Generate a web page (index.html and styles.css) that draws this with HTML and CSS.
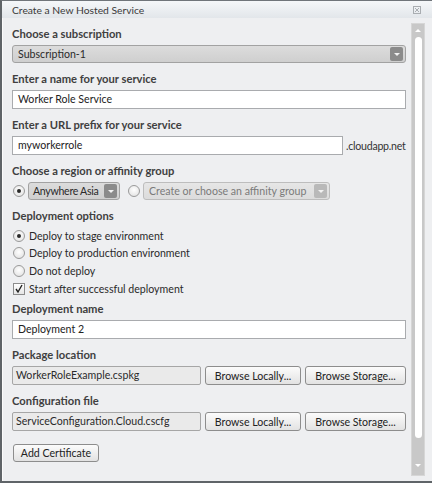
FILE: index.html
```html
<!DOCTYPE html>
<html lang="en">

<head>
    <meta charset="UTF-8">
    <meta name="viewport" content="width=device-width, initial-scale=1.0">
    <title>Create a New Hosted Service</title>
    <link rel="stylesheet" href="styles.css">
</head>

<body>
    <div class="dialog">
        <div class="titlebar">
            <span class="title">Create a New Hosted Service</span>
            <svg class="close" width="8" height="8" viewBox="0 0 8 8">
                <rect x="0.5" y="0.5" width="7" height="7" fill="none" stroke="#a9adb1" />
                <path d="M2 2 L6 6 M6 2 L2 6" stroke="#a9adb1" stroke-width="1" />
            </svg>
        </div>

        <div class="body">
            <div class="content">
                <div class="field">
                    <div class="label">Choose a subscription</div>
                    <div class="select">
                        <span>Subscription-1</span>
                        <span class="arrow"></span>
                    </div>
                </div>

                <div class="field">
                    <div class="label">Enter a name for your service</div>
                    <div class="input">Worker Role Service</div>
                </div>

                <div class="field">
                    <div class="label">Enter a URL prefix for your service</div>
                    <div class="row">
                        <div class="input url">myworkerrole</div>
                        <span class="suffix">.cloudapp.net</span>
                    </div>
                </div>

                <div class="field">
                    <div class="label">Choose a region or affinity group</div>
                    <div class="row region">
                        <span class="radio checked"></span>
                        <div class="select small">
                            <span>Anywhere Asia</span>
                            <span class="arrow"></span>
                        </div>
                        <span class="radio"></span>
                        <div class="select small disabled">
                            <span>Create or choose an affinity group</span>
                            <span class="arrow"></span>
                        </div>
                    </div>
                </div>

                <div class="label">Deployment options</div>
                <div class="options">
                    <div class="option"><span class="radio checked"></span>Deploy to stage environment</div>
                    <div class="option"><span class="radio"></span>Deploy to production environment</div>
                    <div class="option"><span class="radio"></span>Do not deploy</div>
                    <div class="option">
                        <span class="checkbox">
                            <svg width="10" height="10" viewBox="0 0 10 10">
                                <path d="M2 5 L4 8 L8 1" fill="none" stroke="#222" stroke-width="1.4" />
                            </svg>
                        </span>Start after successful deployment
                    </div>
                </div>

                <div class="field">
                    <div class="label">Deployment name</div>
                    <div class="input">Deployment 2</div>
                </div>

                <div class="field">
                    <div class="label">Package location</div>
                    <div class="row browse">
                        <div class="readonly">WorkerRoleExample.cspkg</div>
                        <button class="btn local">Browse Locally...</button>
                        <button class="btn storage">Browse Storage...</button>
                    </div>
                </div>

                <div class="field">
                    <div class="label">Configuration file</div>
                    <div class="row browse">
                        <div class="readonly">ServiceConfiguration.Cloud.cscfg</div>
                        <button class="btn local">Browse Locally...</button>
                        <button class="btn storage">Browse Storage...</button>
                    </div>
                </div>

                <button class="btn cert">Add Certificate</button>
            </div>

            <div class="scrollbar">
                <span class="sb-up"></span>
                <span class="sb-thumb"></span>
                <span class="sb-down"></span>
            </div>
        </div>
    </div>
</body>

</html>
```

FILE: styles.css
```css
/* page */
body {
    margin: 0;
    font-family: Lato, "Liberation Sans", sans-serif;
    font-size: 10.6px;
    color: #333;
}

.dialog {
    width: 432px;
    height: 483px;
    box-sizing: border-box;
    border-top: 1px solid #70757a;
    border-left: 2px solid #5f6468;
    border-bottom: 2px solid #5f6468;
    display: flex;
    flex-direction: column;
    background: #eeeff1;
}

/* title bar */
.titlebar {
    height: 17px;
    display: flex;
    align-items: center;
    justify-content: space-between;
    padding: 0 11px 0 10px;
    background: linear-gradient(#f5f7f9, #e2e6ea);
    color: #3a3a3a;
}

.title {
    font-size: 10.3px;
}

.close {
    display: block;
}

/* body */
.body {
    flex: 1;
    display: flex;
    border-left: 1px solid #fbfbfb;
}

.content {
    width: 408px;
    flex: none;
    box-sizing: border-box;
    padding: 8px 5px 0 9px;
}

.field {
    margin-bottom: 8px;
}

.label {
    height: 16px;
    line-height: 16px;
    margin-bottom: 3px;
    font-size: 11.2px;
    font-weight: bold;
    color: #404040;
}

.row {
    display: flex;
    align-items: center;
}

/* text boxes */
.input {
    box-sizing: border-box;
    height: 19px;
    line-height: 17px;
    padding-left: 5px;
    border: 1px solid #a9abae;
    background: #fff;
    color: #222;
}

.input.url {
    width: 331px;
    flex: none;
}

.suffix {
    margin-left: 3px;
    letter-spacing: -0.25px;
    white-space: nowrap;
    color: #333;
}

.readonly {
    flex: 1;
    box-sizing: border-box;
    height: 19px;
    line-height: 17px;
    padding-left: 3px;
    border: 1px solid #a6a6a6;
    border-radius: 2px;
    background: #eaeaea;
    color: #2a2a2a;
    white-space: nowrap;
}

/* drop downs */
.select {
    box-sizing: border-box;
    height: 18px;
    display: flex;
    align-items: center;
    justify-content: space-between;
    padding: 0 2px 0 5px;
    border: 1px solid #a2a2a2;
    border-radius: 3px;
    background: linear-gradient(#dcdcdc, #cfcfcf);
    color: #2a2a2a;
    white-space: nowrap;
}

.select .arrow {
    width: 13px;
    height: 14px;
    flex: none;
    border-radius: 2px;
    background: #8b8b8b;
    position: relative;
}

.select .arrow::after {
    content: "";
    position: absolute;
    left: 4px;
    top: 6px;
    border-left: 3px solid transparent;
    border-right: 3px solid transparent;
    border-top: 3px solid #f2f2f2;
}

.region {
    height: 18px;
    margin-top: 1px;
}

.region .radio {
    margin: 0 3px 0 1px;
}

.select.small {
    width: 92px;
    flex: none;
    margin-right: 7px;
    padding-left: 4px;
    letter-spacing: -0.3px;
}

.select.disabled {
    width: 187px;
    margin-right: 0;
    padding-left: 5px;
    letter-spacing: 0;
    background: linear-gradient(#e6e6e6, #dcdcdc);
    border-color: #bdbdbd;
    color: #7a7a7a;
}

.select.disabled .arrow {
    background: #b9b9b9;
}

/* radios and checks */
.options {
    margin: 1px 0 4px;
}

.option {
    height: 17.6px;
    display: flex;
    align-items: center;
    color: #2a2a2a;
}

.radio,
.checkbox {
    box-sizing: border-box;
    width: 12px;
    height: 12px;
    flex: none;
    margin: 0 4px 0 1px;
    border: 1px solid #9a9a9a;
    background: radial-gradient(circle at 50% 40%, #ffffff, #dedede);
    display: flex;
    align-items: center;
    justify-content: center;
}

.radio {
    border-radius: 50%;
}

.radio.checked::after {
    content: "";
    width: 4px;
    height: 4px;
    border-radius: 50%;
    background: #2a2a2a;
}

.checkbox {
    border-color: #8c8c8c;
    background: linear-gradient(#ffffff, #e6e6e6);
}

.checkbox svg {
    display: block;
}

/* buttons */
.btn {
    box-sizing: border-box;
    height: 19px;
    padding: 0;
    border: 1px solid #8d8d8d;
    border-radius: 3px;
    background: linear-gradient(#fcfcfc, #e2e2e2);
    font-family: inherit;
    font-size: 10.6px;
    color: #222;
    flex: none;
}

.browse .btn {
    margin-left: 4px;
}

.btn.local {
    width: 96px;
}

.btn.storage {
    width: 101px;
}

.btn.cert {
    width: 86px;
    height: 18px;
    margin: 5px 0 0 1px;
}

/* scrollbar */
.scrollbar {
    width: 14px;
    flex: none;
    margin: 5px 7px 5px 0;
    box-sizing: border-box;
    border: 1px solid #d6d6d6;
    background: #c8c8c8;
    display: flex;
    flex-direction: column;
    align-items: center;
}

.sb-up,
.sb-down {
    width: 0;
    height: 0;
    border-left: 3px solid transparent;
    border-right: 3px solid transparent;
}

.sb-up {
    margin-top: 5px;
    border-bottom: 3px solid #fff;
}

.sb-down {
    margin-top: 26px;
    border-top: 3px solid #fff;
}

.sb-thumb {
    width: 7px;
    height: 401px;
    margin-top: 5px;
    border-radius: 4px;
    background: #fff;
}
```
